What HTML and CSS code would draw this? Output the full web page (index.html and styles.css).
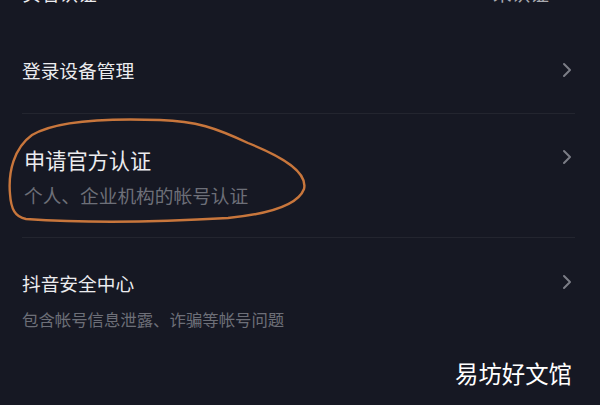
FILE: index.html
```html
<!DOCTYPE html>
<html lang="zh-CN">
<head>
    <meta charset="UTF-8">
    <meta name="viewport" content="width=device-width, initial-scale=1.0">
    <title>账号与安全</title>
    <link rel="stylesheet" href="styles.css">
</head>
<body>
    <div class="screen">
        <div class="list">
            <div class="row row-first">
                <div class="rowText">
                    <div class="rowTitle">实名认证</div>
                </div>
                <div class="rowValue">未认证</div>
                <svg class="chevron" width="10" height="16" viewBox="0 0 10 16"><path d="M2 2 L8 8 L2 14" fill="none" stroke="#7b7d86" stroke-width="2" stroke-linecap="round" stroke-linejoin="round"/></svg>
            </div>
            <div class="row row-device">
                <div class="rowText">
                    <div class="rowTitle">登录设备管理</div>
                </div>
                <svg class="chevron" width="10" height="16" viewBox="0 0 10 16"><path d="M2 2 L8 8 L2 14" fill="none" stroke="#7b7d86" stroke-width="2" stroke-linecap="round" stroke-linejoin="round"/></svg>
            </div>
            <div class="divider"></div>
            <div class="row row-official">
                <div class="rowText">
                    <div class="rowTitle">申请官方认证</div>
                    <div class="rowSub">个人、企业机构的帐号认证</div>
                </div>
                <svg class="chevron" width="10" height="16" viewBox="0 0 10 16"><path d="M2 2 L8 8 L2 14" fill="none" stroke="#7b7d86" stroke-width="2" stroke-linecap="round" stroke-linejoin="round"/></svg>
            </div>
            <div class="divider"></div>
            <div class="row row-safety">
                <div class="rowText">
                    <div class="rowTitle">抖音安全中心</div>
                    <div class="rowSub">包含帐号信息泄露、诈骗等帐号问题</div>
                </div>
                <svg class="chevron" width="10" height="16" viewBox="0 0 10 16"><path d="M2 2 L8 8 L2 14" fill="none" stroke="#7b7d86" stroke-width="2" stroke-linecap="round" stroke-linejoin="round"/></svg>
            </div>
        </div>

        <!-- marcacao feita a mao por cima do print -->
        <svg class="scribble" width="600" height="405" viewBox="0 0 600 405">
            <path d="M160 120 C105 118 55 121 32 135 C14 148 8 172 10 194 C11 209 15 217 26 219 C85 223 160 222 228 218 C268 214 298 205 304 189 C308 172 283 157 248 143 C216 128 196 121 160 120 Z" fill="none" stroke="#c8763c" stroke-width="2.4" stroke-linejoin="round"/>
        </svg>

        <div class="watermark">易坊好文馆</div>
    </div>
</body>
</html>
```

FILE: styles.css
```css
body {
  margin: 0;
  background-color: #161823;
  font-family: "Noto Sans CJK SC", "Noto Sans", sans-serif;
}
.screen {
  position: relative;
  width: 600px;
  height: 405px;
  overflow: hidden;
  background-color: #161823;
}
.list {
  margin-top: -44px;
}
.row {
  display: flex;
  align-items: center;
  padding: 0 28px 0 22px;
}
.rowText {
  flex: 1;
  display: flex;
  flex-direction: column;
}
.rowTitle {
  color: #ececef;
  font-size: 18.7px;
  line-height: 26px;
}
.rowSub {
  color: #6d6f78;
  font-size: 16.4px;
  line-height: 24px;
}
.rowValue {
  color: #a9aab0;
  font-size: 18.7px;
  line-height: 26px;
  margin-right: 13px;
}
.chevron {
  display: block;
  flex: none;
}
.row-first {
  padding-top: 24px;
  padding-bottom: 27px;
}
.row-device {
  padding-top: 24px;
  padding-bottom: 30px;
}
.row-official {
  padding-top: 32px;
  padding-bottom: 29px;
  padding-left: 24px;
}
.row-official .rowTitle {
  font-size: 21.2px;
  line-height: 28px;
}
.row-official .rowSub {
  font-size: 18.7px;
  line-height: 26px;
  margin-top: 8px;
}
.row-official .chevron {
  margin-top: -40px;
}
.row-safety {
  padding-top: 32px;
}
.row-safety .rowSub {
  margin-top: 11px;
}
.row-safety .chevron {
  margin-top: -38px;
}
.divider {
  height: 1px;
  margin: 0 25px 0 22px;
  background-color: #23252f;
}
.scribble {
  position: absolute;
  left: 0;
  top: 0;
}
.watermark {
  position: absolute;
  right: 28px;
  top: 357px;
  color: #ffffff;
  font-size: 23.4px;
  line-height: 32px;
}
```
